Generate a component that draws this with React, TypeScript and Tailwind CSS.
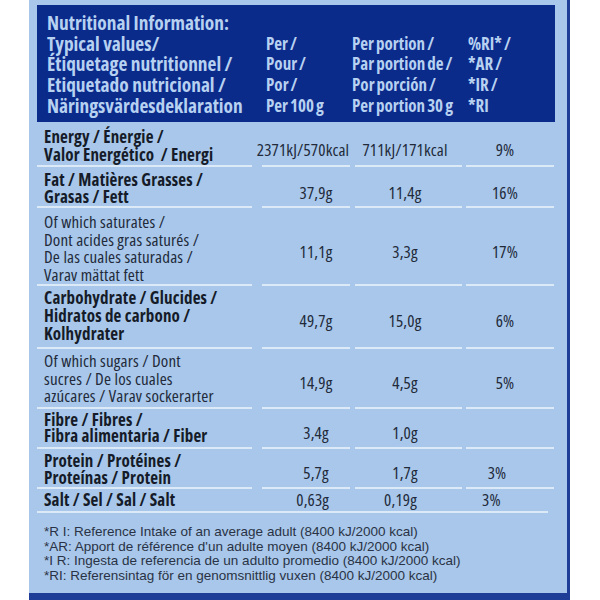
import React from 'react'

type Row = {
  label: string[]
  bold: boolean
  h: string
  lp: string
  vp: string
  v: string[]
  c2?: string
  c4?: string
}

const rows: Row[] = [
  { label: ['Energy / Énergie /', 'Valor Energético  / Energi'], bold: true, h: 'h-[45px]', lp: 'pt-[6px] leading-[18px]', vp: 'pt-[13px]', v: ['2371kJ/570kcal', '711kJ/171kcal', '9%'], c2: 'pr-[6px]' },
  { label: ['Fat / Matières Grasses /', 'Grasas / Fett'], bold: true, h: 'h-[41px]', lp: 'pt-[4px] leading-[17px]', vp: 'pt-[13px]', v: ['37,9g', '11,4g', '16%'] },
  { label: ['Of which saturates /', 'Dont acides gras saturés /', 'De las cuales saturadas /', 'Varav mättat fett'], bold: false, h: 'h-[78px]', lp: 'pt-[5px] leading-[17.7px]', vp: 'pt-[12px]', v: ['11,1g', '3,3g', '17%'] },
  { label: ['Carbohydrate / Glucides /', 'Hidratos de carbono /', 'Kolhydrater'], bold: true, h: 'h-[63px]', lp: 'pt-[3px] leading-[18px]', vp: 'pt-[9px]', v: ['49,7g', '15,0g', '6%'] },
  { label: ['Of which sugars / Dont', 'sucres / De los cuales', 'azúcares / Varav sockerarter'], bold: false, h: 'h-[60px]', lp: 'pt-[3px] leading-[17.5px]', vp: 'pt-[10px]', v: ['14,9g', '4,5g', '5%'] },
  { label: ['Fibre / Fibres /', 'Fibra alimentaria / Fiber'], bold: true, h: 'h-[40px]', lp: 'pt-[3px] leading-[16px]', vp: 'pt-[10px]', v: ['3,4g', '1,0g', ''] },
  { label: ['Protein / Protéines /', 'Proteínas / Protein'], bold: true, h: 'h-[40px]', lp: 'pt-[4px] leading-[16.5px]', vp: 'pt-[10px]', v: ['5,7g', '1,7g', '3%'], c4: 'pr-[26px]' },
]

const line = 'border-b-2 border-[#dce9f7]'
const boldTxt = 'font-bold text-[17px] tracking-[0.01em] text-[#151b28]'
const regTxt = 'font-normal text-[17px] tracking-[0.01em] text-[#222a3a]'

const App = () => {
  return (
    <div className="w-[600px] h-[600px] bg-white flex font-['Open_Sans',sans-serif] font-stretch-condensed">
      <div className="ml-[29px] w-[541px] h-full bg-[#a8c7ea] border-r-[3px] border-[#1d3d96] flex flex-col">
        {/* header */}
        <div className="mt-[5px] ml-[8px] w-[518px] h-[117px] bg-[#0b2b8b] pt-[8px] pl-[10px] text-[#b7d1f1] whitespace-nowrap font-bold text-[19.4px] leading-[20.7px]">
          <p>Nutritional Information:</p>
          <div className="grid grid-cols-[219px_86px_116px_1fr]">
            <div>
              <p>Typical values/</p>
              <p>Étiquetage nutritionnel /</p>
              <p>Etiquetado nutricional /</p>
              <p>Näringsvärdesdeklaration</p>
            </div>
            <div className="text-[17px] [word-spacing:-1px]">
              <p>Per /</p>
              <p>Pour /</p>
              <p>Por  /</p>
              <p>Per 100 g</p>
            </div>
            <div className="text-[17px] [word-spacing:-1px]">
              <p>Per portion /</p>
              <p>Par portion de /</p>
              <p>Por porción  /</p>
              <p>Per portion 30 g</p>
            </div>
            <div className="text-[17px] [word-spacing:-1px]">
              <p>%RI* /</p>
              <p>*AR /</p>
              <p>*IR /</p>
              <p>*RI</p>
            </div>
          </div>
        </div>

        {/* rows */}
        {rows.map((r, i) => (
          <div key={i} className={`flex ml-[8px] ${r.h}`}>
            <div className={`w-[215px] pl-[7px] ${line} ${r.lp} ${r.bold ? boldTxt : regTxt}`}>
              {r.label.map((l, j) => (
                <p key={j} className="whitespace-pre">{l}</p>
              ))}
            </div>
            <div className={`ml-[10px] w-[88px] ${line} ${regTxt} flex items-center justify-center ${r.vp} ${r.c2 ?? 'pl-[20px]'}`}>{r.v[0]}</div>
            <div className={`ml-[5px] w-[107px] ${line} ${regTxt} flex items-center justify-center pr-[7px] ${r.vp}`}>{r.v[1]}</div>
            <div className={`ml-[4px] w-[88px] ${line} ${regTxt} flex items-center justify-center ${r.vp} ${r.c4 ?? 'pr-[10px]'}`}>{r.v[2]}</div>
          </div>
        ))}

        {/* salt */}
        <div className={`flex ml-[8px] w-[511px] h-[24px] items-center ${line}`}>
          <div className={`w-[215px] pl-[7px] ${boldTxt}`}>Salt / Sel / Sal / Salt</div>
          <div className={`ml-[10px] w-[88px] text-center pl-[20px] ${regTxt}`}>0,63g</div>
          <div className={`ml-[5px] w-[107px] text-center pr-[7px] ${regTxt}`}>0,19g</div>
          <div className={`ml-[4px] w-[88px] text-center pr-[26px] ${regTxt}`}>3%</div>
        </div>

        {/* footnotes */}
        <div className="pl-[15px] pt-[12px] text-[13.5px] leading-[14.7px] text-[#2a3345] font-['Liberation_Sans',Arial,sans-serif] font-stretch-normal">
          <p>*R I: Reference Intake of an average adult (8400 kJ/2000 kcal)</p>
          <p>*AR: Apport de référence d'un adulte moyen (8400 kJ/2000 kcal)</p>
          <p>*I R:  Ingesta de referencia de un adulto promedio (8400 kJ/2000 kcal)</p>
          <p>*RI: Referensintag för en genomsnittlig vuxen (8400 kJ/2000 kcal)</p>
        </div>

        <div className="mt-auto h-[7px] bg-[#1d3d96]"></div>
      </div>
    </div>
  )
}

export default App
